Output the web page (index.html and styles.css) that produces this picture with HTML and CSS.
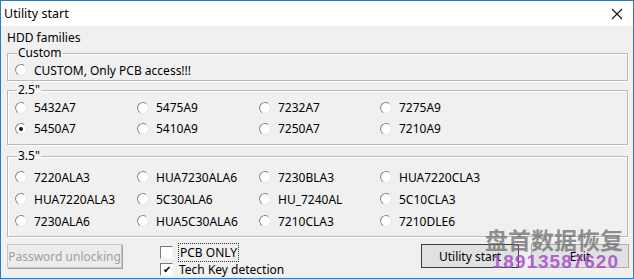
FILE: index.html
```html
<!DOCTYPE html>
<html lang="en">
<head>
  <meta charset="UTF-8">
  <title>Utility start</title>
  <link rel="stylesheet" href="styles.css">
</head>
<body>
  <div class="window">
    <div class="titlebar">
      <span class="title">Utility start</span>
      <svg class="close" width="12" height="12" viewBox="0 0 12 12">
        <path d="M1 1 L11 11 M11 1 L1 11" stroke="#111" stroke-width="1.1" fill="none"/>
      </svg>
    </div>

    <div class="client">
      <div class="caption">HDD families</div>

      <fieldset class="group group-custom">
        <legend>Custom</legend>
        <div class="grid one">
          <label class="opt"><span class="radio"></span>CUSTOM, Only PCB access!!!</label>
        </div>
      </fieldset>

      <fieldset class="group group-25">
        <legend>2.5"</legend>
        <div class="grid">
          <label class="opt"><span class="radio"></span>5432A7</label>
          <label class="opt"><span class="radio"></span>5475A9</label>
          <label class="opt"><span class="radio"></span>7232A7</label>
          <label class="opt"><span class="radio"></span>7275A9</label>
          <label class="opt"><span class="radio checked"></span>5450A7</label>
          <label class="opt"><span class="radio"></span>5410A9</label>
          <label class="opt"><span class="radio"></span>7250A7</label>
          <label class="opt"><span class="radio"></span>7210A9</label>
        </div>
      </fieldset>

      <fieldset class="group group-35">
        <legend>3.5"</legend>
        <div class="grid">
          <label class="opt"><span class="radio"></span>7220ALA3</label>
          <label class="opt"><span class="radio"></span>HUA7230ALA6</label>
          <label class="opt"><span class="radio"></span>7230BLA3</label>
          <label class="opt"><span class="radio"></span>HUA7220CLA3</label>
          <label class="opt"><span class="radio"></span>HUA7220ALA3</label>
          <label class="opt"><span class="radio"></span>5C30ALA6</label>
          <label class="opt"><span class="radio"></span>HU_7240AL</label>
          <label class="opt"><span class="radio"></span>5C10CLA3</label>
          <label class="opt"><span class="radio"></span>7230ALA6</label>
          <label class="opt"><span class="radio"></span>HUA5C30ALA6</label>
          <label class="opt"><span class="radio"></span>7210CLA3</label>
          <label class="opt"><span class="radio"></span>7210DLE6</label>
        </div>
      </fieldset>

      <div class="bottom">
        <button class="btn disabled">Password unlocking</button>
        <div class="checks">
          <label class="chk"><span class="box"></span><span class="focus">PCB ONLY</span></label>
          <label class="chk"><span class="box checked">&#10004;</span>Tech Key detection</label>
        </div>
        <div class="actions">
          <button class="btn default">Utility start</button>
          <button class="btn">Exit</button>
        </div>
      </div>
    </div>

    <!-- watermark stamped over the screenshot -->
    <div class="watermark">
      <div class="wm-name">盘首数据恢复</div>
      <div class="wm-phone">18913587620</div>
    </div>
  </div>
</body>
</html>
```

FILE: styles.css
```css
body {
  margin: 0;
  font-family: "Noto Sans", "Open Sans", sans-serif;
  font-size: 12px;
  color: #000;
  background: #fff;
}
.window {
  position: relative;
  width: 634px;
  height: 279px;
  box-sizing: border-box;
  border: 1px solid #2a7cc0;
  background: #f0f0f0;
  overflow: hidden;
}
.titlebar {
  height: 25px;
  background: #fff;
  display: flex;
  align-items: center;
  justify-content: space-between;
  padding: 0 10px 0 3px;
}
.title {
  font-size: 12.5px;
}
.client {
  padding: 5px 5px 0 6px;
}
.caption {
  line-height: 14px;
  margin-bottom: 1px;
}
.group {
  margin: 0;
  padding: 0 0 2px 8px;
  border: 1px solid #b9b9b9;
  box-shadow: inset 1px 1px 0 #fff, 1px 1px 0 #fff;
}
.group legend {
  padding: 0 1px;
  margin-left: 1px;
  line-height: 14px;
}
.group-custom .grid {
  padding-top: 2px;
}
.group-25 {
  margin-top: 2px;
  padding-bottom: 5px;
}
.group-35 {
  margin-top: 4px;
  padding-bottom: 4px;
}
.group-35 .grid {
  padding-top: 3px;
}
.grid {
  display: grid;
  grid-template-columns: 122px 122px 121px 122px;
}
.grid.one {
  grid-template-columns: 1fr;
}
.opt {
  display: flex;
  align-items: center;
  height: 21px;
  white-space: nowrap;
}
.group-custom .opt {
  height: 16px;
}
.group-35 .opt {
  height: 22px;
}
.radio {
  width: 10px;
  height: 10px;
  border-radius: 50%;
  border: 1px solid;
  border-color: #8c8c8c #e6e6e6 #e6e6e6 #8c8c8c;
  background: #fff;
  margin-right: 7px;
  margin-left: -1px;
  position: relative;
  transform: rotate(-10deg);
}
.radio.checked::after {
  content: "";
  position: absolute;
  left: 3px;
  top: 3px;
  width: 4px;
  height: 4px;
  border-radius: 50%;
  background: #111;
}
.bottom {
  display: flex;
  align-items: flex-start;
  margin-top: 7px;
}
.btn {
  font-family: inherit;
  font-size: 12px;
  height: 24px;
  background: #e1e1e1;
  border: 1px solid #adadad;
  color: #000;
  padding: 0;
}
.btn.disabled {
  width: 115px;
  color: #a0a0a0;
  background: #ececec;
  border-color: #c8c8c8;
  box-shadow: 1px 1px 0 #a0a0a0;
}
.checks {
  display: flex;
  flex-direction: column;
  margin-left: 38px;
}
.chk {
  display: flex;
  align-items: center;
  height: 17px;
}
.box {
  width: 11px;
  height: 11px;
  border: 1px solid;
  border-color: #7a7a7a #f4f4f4 #f4f4f4 #7a7a7a;
  background: #fff;
  margin-right: 6px;
  font-size: 10px;
  line-height: 11px;
  text-align: center;
  color: #000;
}
.focus {
  outline: 1px dotted #333;
  outline-offset: 0;
  padding: 0 1px;
}
.actions {
  margin-left: auto;
  display: flex;
  gap: 12px;
  margin-right: -1px;
}
.actions .btn {
  width: 98px;
}
.btn.default {
  border: 1px solid #3c3c3c;
}
.watermark {
  position: absolute;
  right: 0;
  bottom: 6px;
  text-align: right;
  pointer-events: none;
}
.wm-name {
  font-family: "Noto Sans CJK SC", sans-serif;
  font-weight: 700;
  font-size: 23px;
  line-height: 24px;
  padding-right: 10px;
  color: rgba(105, 105, 105, 0.72);
}
.wm-phone {
  font-family: "Liberation Sans", sans-serif;
  font-weight: 700;
  font-size: 19px;
  letter-spacing: 1px;
  line-height: 20px;
  margin-top: 1px;
  padding-right: 14px;
  color: rgba(165, 75, 205, 0.85);
}
```
